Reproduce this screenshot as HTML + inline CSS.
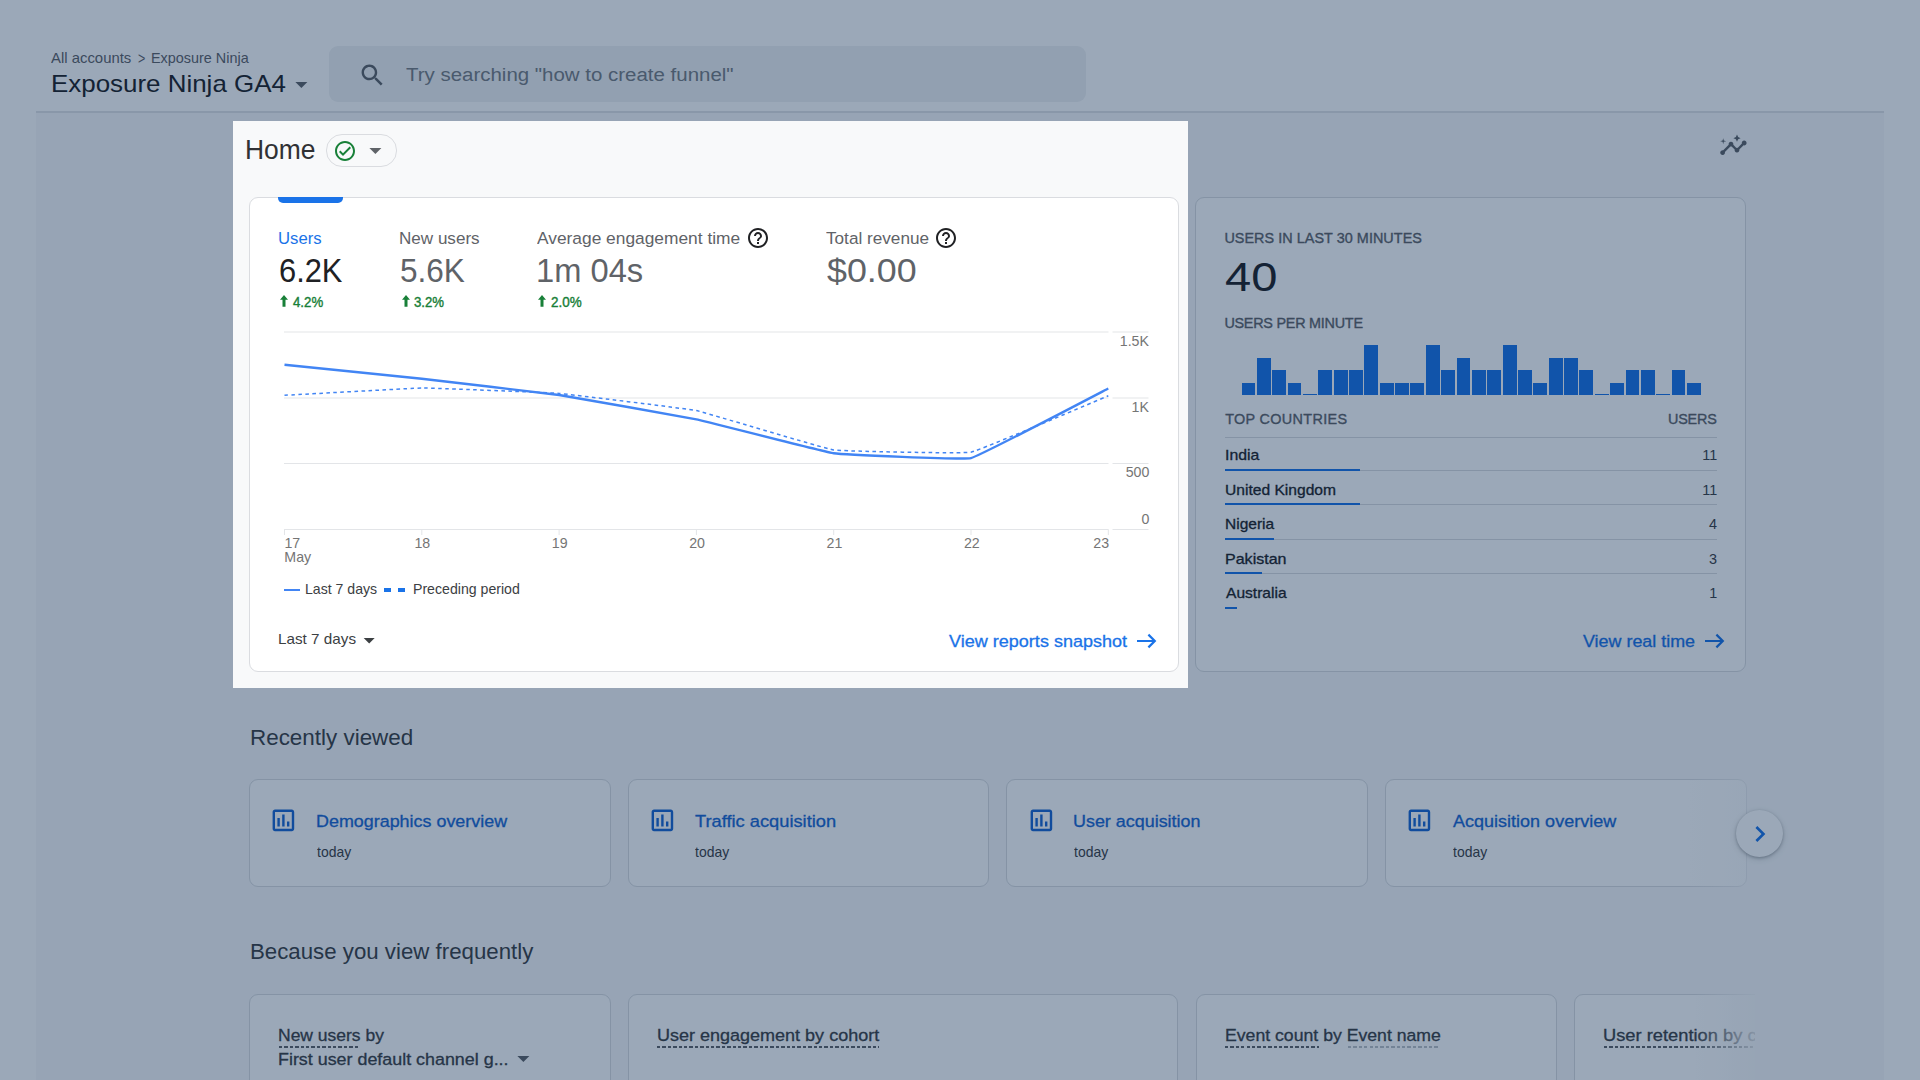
<!DOCTYPE html>
<html lang="en"><head><meta charset="utf-8"><title>Analytics | Home</title>
<style>
html,body{margin:0;padding:0;}
body{width:1920px;height:1080px;overflow:hidden;position:relative;background:#fff;font-family:"Liberation Sans", sans-serif;}
#app{position:absolute;left:0;top:0;width:1920px;height:1080px;overflow:hidden;}
</style></head><body><div id="app">
<div style="position:absolute;left:36px;top:112px;width:1848px;height:968px;background:#f8f9fa;"></div>
<div style="position:absolute;left:36px;top:111px;width:1848px;height:2px;background:#e1e3e7;"></div>
<div style="position:absolute;top:51px;font-size:14.4px;line-height:14.4px;color:#5f6368;white-space:nowrap;left:51.27px;transform:scaleX(1.0351);transform-origin:0 0;">All accounts</div>
<div style="position:absolute;top:50px;font-size:16.5px;line-height:16.5px;color:#5f6368;white-space:nowrap;left:138.09px;transform:scaleX(0.7591);transform-origin:0 0;">&gt;</div>
<div style="position:absolute;top:51px;font-size:14.4px;line-height:14.4px;color:#5f6368;white-space:nowrap;left:150.57px;transform:scaleX(1.0007);transform-origin:0 0;">Exposure Ninja</div>
<div style="position:absolute;top:72px;font-size:24px;line-height:24px;color:#202124;white-space:nowrap;left:50.87px;transform:scaleX(1.0802);transform-origin:0 0;">Exposure Ninja GA4</div>
<svg style="position:absolute;left:287.1px;top:69.6px" width="28.8" height="28.8" viewBox="0 0 24 24"><path fill="#5f6368" d="M7 10l5 5 5-5z"/></svg>
<div style="position:absolute;left:329px;top:46px;width:757px;height:56px;background:#f0f2f3;border-radius:9px;"></div>
<svg style="position:absolute;left:357.5px;top:61px" width="28.8" height="28.8" viewBox="0 0 24 24"><path fill="#5f6368" d="M15.5 14h-.79l-.28-.27C15.41 12.59 16 11.11 16 9.5 16 5.91 13.09 3 9.5 3S3 5.91 3 9.5 5.91 16 9.5 16c1.61 0 3.09-.59 4.23-1.57l.27.28v.79l5 4.99L20.49 19l-4.99-5zm-6 0C7.01 14 5 11.99 5 9.5S7.01 5 9.5 5 14 7.01 14 9.5 11.99 14 9.5 14z"/></svg>
<div style="position:absolute;top:65px;font-size:19.2px;line-height:19.2px;color:#787d83;white-space:nowrap;left:406.05px;transform:scaleX(1.0662);transform-origin:0 0;">Try searching &quot;how to create funnel&quot;</div>
<div style="position:absolute;top:137px;font-size:27px;line-height:27px;color:#303134;white-space:nowrap;left:245.13px;transform:scaleX(0.9795);transform-origin:0 0;">Home</div>
<div style="position:absolute;left:326px;top:134px;width:70.5px;height:33px;box-sizing:border-box;border:1px solid #dadce0;border-radius:16px;"></div>
<svg style="position:absolute;left:332.5px;top:138.5px" width="24" height="24" viewBox="0 0 24 24"><path fill="#188038" d="M12 2C6.48 2 2 6.48 2 12s4.48 10 10 10 10-4.48 10-10S17.52 2 12 2zm0 18c-4.41 0-8-3.59-8-8s3.59-8 8-8 8 3.59 8 8-3.59 8-8 8zm4.59-12.42L10 14.17l-2.59-2.58L6 13l4 4 8-8z"/></svg>
<svg style="position:absolute;left:360.6px;top:136.0px" width="28.8" height="28.8" viewBox="0 0 24 24"><path fill="#5f6368" d="M7 10l5 5 5-5z"/></svg>
<svg style="position:absolute;left:1719.3px;top:131.0px" width="28.8" height="28.8" viewBox="0 0 24 24"><path fill="#5f6368" d="M21 8c-1.45 0-2.26 1.44-1.93 2.51l-3.55 3.56c-.3-.09-.74-.09-1.04 0l-2.55-2.55C12.27 10.45 11.46 9 10 9c-1.45 0-2.27 1.44-1.93 2.52l-4.56 4.55C2.44 15.74 1 16.55 1 18c0 1.1.9 2 2 2 1.45 0 2.26-1.44 1.93-2.51l4.55-4.56c.3.09.74.09 1.04 0l2.55 2.55C12.73 16.55 13.54 18 15 18c1.45 0 2.27-1.44 1.93-2.52l3.56-3.55c1.07.33 2.51-.48 2.51-1.93 0-1.1-.9-2-2-2zM15 9l.94-2.07L18 6l-2.06-.93L15 3l-.92 2.07L12 6l2.08.93zM3.5 11L4 9l2-.5L4 8l-.5-2L3 8l-2 .5L3 9z"/></svg>
<div style="position:absolute;left:249px;top:197px;width:929.5px;height:475px;box-sizing:border-box;background:#fff;border:1px solid #dadce0;border-radius:9px;"></div>
<div style="position:absolute;left:278.25px;top:197px;width:65px;height:5.5px;background:#1a73e8;border-radius:0 0 5px 5px;"></div>
<div style="position:absolute;top:231px;font-size:16.8px;line-height:16.8px;color:#1a73e8;white-space:nowrap;left:278.21px;transform:scaleX(0.9948);transform-origin:0 0;">Users</div>
<div style="position:absolute;top:254px;font-size:33.6px;line-height:33.6px;color:#202124;white-space:nowrap;left:278.76px;transform:scaleX(0.9185);transform-origin:0 0;">6.2K</div>
<div style="position:absolute;top:231px;font-size:16.8px;line-height:16.8px;color:#5f6368;white-space:nowrap;left:399.10px;transform:scaleX(1.0170);transform-origin:0 0;">New users</div>
<div style="position:absolute;top:254px;font-size:33.6px;line-height:33.6px;color:#5f6368;white-space:nowrap;left:399.84px;transform:scaleX(0.9391);transform-origin:0 0;">5.6K</div>
<div style="position:absolute;top:231px;font-size:16.8px;line-height:16.8px;color:#5f6368;white-space:nowrap;left:537.37px;transform:scaleX(1.0338);transform-origin:0 0;">Average engagement time</div>
<div style="position:absolute;top:254px;font-size:33.6px;line-height:33.6px;color:#5f6368;white-space:nowrap;left:535.81px;transform:scaleX(0.9736);transform-origin:0 0;">1m 04s</div>
<div style="position:absolute;top:231px;font-size:16.8px;line-height:16.8px;color:#5f6368;white-space:nowrap;left:826.12px;transform:scaleX(1.0225);transform-origin:0 0;">Total revenue</div>
<div style="position:absolute;top:254px;font-size:33.6px;line-height:33.6px;color:#5f6368;white-space:nowrap;left:826.64px;transform:scaleX(1.0673);transform-origin:0 0;">$0.00</div>
<svg style="position:absolute;left:745.7px;top:226.4px" width="24" height="24" viewBox="0 0 24 24"><path fill="#202124" d="M11 18h2v-2h-2v2zm1-16C6.48 2 2 6.48 2 12s4.48 10 10 10 10-4.48 10-10S17.52 2 12 2zm0 18c-4.41 0-8-3.59-8-8s3.59-8 8-8 8 3.59 8 8-3.59 8-8 8zm0-14c-2.21 0-4 1.79-4 4h2c0-1.1.9-2 2-2s2 .9 2 2c0 2-3 1.75-3 5h2c0-2.25 3-2.5 3-5 0-2.21-1.79-4-4-4z"/></svg>
<svg style="position:absolute;left:933.5px;top:226.4px" width="24" height="24" viewBox="0 0 24 24"><path fill="#202124" d="M11 18h2v-2h-2v2zm1-16C6.48 2 2 6.48 2 12s4.48 10 10 10 10-4.48 10-10S17.52 2 12 2zm0 18c-4.41 0-8-3.59-8-8s3.59-8 8-8 8 3.59 8 8-3.59 8-8 8zm0-14c-2.21 0-4 1.79-4 4h2c0-1.1.9-2 2-2s2 .9 2 2c0 2-3 1.75-3 5h2c0-2.25 3-2.5 3-5 0-2.21-1.79-4-4-4z"/></svg>
<svg style="position:absolute;left:280.4px;top:295px" width="8" height="12" viewBox="0 0 8 12"><path fill="#188038" d="M4 0L8 4.8H5.5V11.8H2.5V4.8H0z"/></svg>
<div style="position:absolute;top:295px;font-size:14.4px;line-height:14.4px;color:#188038;white-space:nowrap;left:292.91px;transform:scaleX(0.9188);transform-origin:0 0;-webkit-text-stroke:0.4px #188038;">4.2%</div>
<svg style="position:absolute;left:401.9px;top:295px" width="8" height="12" viewBox="0 0 8 12"><path fill="#188038" d="M4 0L8 4.8H5.5V11.8H2.5V4.8H0z"/></svg>
<div style="position:absolute;top:295px;font-size:14.4px;line-height:14.4px;color:#188038;white-space:nowrap;left:414.40px;transform:scaleX(0.9161);transform-origin:0 0;-webkit-text-stroke:0.4px #188038;">3.2%</div>
<svg style="position:absolute;left:538.4px;top:295px" width="8" height="12" viewBox="0 0 8 12"><path fill="#188038" d="M4 0L8 4.8H5.5V11.8H2.5V4.8H0z"/></svg>
<div style="position:absolute;top:295px;font-size:14.4px;line-height:14.4px;color:#188038;white-space:nowrap;left:550.83px;transform:scaleX(0.9337);transform-origin:0 0;-webkit-text-stroke:0.4px #188038;">2.0%</div>
<svg style="position:absolute;left:0;top:0" width="1920" height="720" viewBox="0 0 1920 720"><rect x="284" y="331.5" width="824.5" height="1" fill="#e3e5e8"/><rect x="1112.5" y="331.5" width="36" height="1" fill="#e3e5e8"/><rect x="284" y="397.5" width="824.5" height="1" fill="#e3e5e8"/><rect x="1112.5" y="397.5" width="36" height="1" fill="#e3e5e8"/><rect x="284" y="463.0" width="824.5" height="1" fill="#e3e5e8"/><rect x="1112.5" y="463.0" width="36" height="1" fill="#e3e5e8"/><rect x="284" y="529.0" width="824.5" height="1" fill="#e3e5e8"/><rect x="1112.5" y="529.0" width="36" height="1" fill="#e3e5e8"/><rect x="284.0" y="529.5" width="1" height="5.5" fill="#e3e5e8"/><rect x="421.3" y="529.5" width="1" height="5.5" fill="#e3e5e8"/><rect x="558.6" y="529.5" width="1" height="5.5" fill="#e3e5e8"/><rect x="695.9" y="529.5" width="1" height="5.5" fill="#e3e5e8"/><rect x="833.2" y="529.5" width="1" height="5.5" fill="#e3e5e8"/><rect x="970.5" y="529.5" width="1" height="5.5" fill="#e3e5e8"/><rect x="1107.8" y="529.5" width="1" height="5.5" fill="#e3e5e8"/><path d="M284.5,395.3 C288.6,395.1 413.6,388.1 421.8,388.0 C430.0,387.9 550.9,392.7 559.1,393.4 C567.3,394.1 688.2,408.9 696.4,410.6 C704.6,412.3 825.5,448.8 833.7,450.0 C841.9,451.2 962.8,453.8 971.0,452.2 C979.2,450.6 1104.2,397.5 1108.3,395.8" fill="none" stroke="#4285f4" stroke-width="1.5" stroke-dasharray="3.6,3.4"/><path d="M284.5,364.7 C288.6,365.1 413.6,377.8 421.8,378.8 C430.0,379.7 550.9,393.8 559.1,395.0 C567.3,396.2 688.2,417.7 696.4,419.4 C704.6,421.1 825.5,452.1 833.7,453.3 C841.9,454.5 962.8,460.0 971.0,458.1 C979.2,456.2 1104.2,390.6 1108.3,388.5" fill="none" stroke="#4285f4" stroke-width="2.4" stroke-linejoin="round"/></svg>
<div style="position:absolute;top:334px;font-size:14.2px;line-height:14.2px;color:#757575;white-space:nowrap;right:771.04px;">1.5K</div>
<div style="position:absolute;top:400px;font-size:14.2px;line-height:14.2px;color:#757575;white-space:nowrap;right:771.04px;">1K</div>
<div style="position:absolute;top:465px;font-size:14.2px;line-height:14.2px;color:#757575;white-space:nowrap;right:770.65px;">500</div>
<div style="position:absolute;top:512px;font-size:14.2px;line-height:14.2px;color:#757575;white-space:nowrap;right:770.66px;">0</div>
<div style="position:absolute;top:536px;font-size:14.2px;line-height:14.2px;color:#757575;white-space:nowrap;left:284.42px;">17</div>
<div style="position:absolute;top:550px;font-size:14.2px;line-height:14.2px;color:#757575;white-space:nowrap;left:284.34px;">May</div>
<div style="position:absolute;top:536px;font-size:14.2px;line-height:14.2px;color:#757575;white-space:nowrap;left:414.47px;">18</div>
<div style="position:absolute;top:536px;font-size:14.2px;line-height:14.2px;color:#757575;white-space:nowrap;left:551.80px;">19</div>
<div style="position:absolute;top:536px;font-size:14.2px;line-height:14.2px;color:#757575;white-space:nowrap;left:689.22px;">20</div>
<div style="position:absolute;top:536px;font-size:14.2px;line-height:14.2px;color:#757575;white-space:nowrap;left:826.59px;">21</div>
<div style="position:absolute;top:536px;font-size:14.2px;line-height:14.2px;color:#757575;white-space:nowrap;left:963.90px;">22</div>
<div style="position:absolute;top:536px;font-size:14.2px;line-height:14.2px;color:#757575;white-space:nowrap;right:810.98px;">23</div>
<div style="position:absolute;left:284.2px;top:589px;width:15.7px;height:2.4px;background:#4285f4;"></div>
<div style="position:absolute;top:582px;font-size:14.2px;line-height:14.2px;color:#3c4043;white-space:nowrap;left:304.64px;transform:scaleX(0.9938);transform-origin:0 0;">Last 7 days</div>
<div style="position:absolute;left:384.4px;top:588.3px;width:7px;height:3.6px;background:#1a73e8;"></div>
<div style="position:absolute;left:398.2px;top:588.3px;width:7px;height:3.6px;background:#1a73e8;"></div>
<div style="position:absolute;top:582px;font-size:14.2px;line-height:14.2px;color:#3c4043;white-space:nowrap;left:412.54px;transform:scaleX(0.9955);transform-origin:0 0;">Preceding period</div>
<div style="position:absolute;top:632px;font-size:14.4px;line-height:14.4px;color:#3c4043;white-space:nowrap;left:278.45px;transform:scaleX(1.0606);transform-origin:0 0;">Last 7 days</div>
<svg style="position:absolute;left:355.8px;top:627.0px" width="26.4" height="26.4" viewBox="0 0 24 24"><path fill="#3c4043" d="M7 10l5 5 5-5z"/></svg>
<div style="position:absolute;top:634px;font-size:16.8px;line-height:16.8px;color:#1a73e8;white-space:nowrap;left:948.83px;transform:scaleX(1.0746);transform-origin:0 0;-webkit-text-stroke:0.3px #1a73e8;">View reports snapshot</div>
<svg style="position:absolute;left:1136px;top:631.8px" width="22" height="18" viewBox="0 0 22 18"><path d="M1 9H18.6M12.4 2.6L18.8 9L12.4 15.4" fill="none" stroke="#1a73e8" stroke-width="2.2"/></svg>
<div style="position:absolute;left:1195px;top:197px;width:551px;height:475px;box-sizing:border-box;background:#fff;border:1px solid #dadce0;border-radius:9px;"></div>
<div style="position:absolute;top:231px;font-size:14.4px;line-height:14.4px;color:#5f6368;white-space:nowrap;left:1224.39px;letter-spacing:0.046px;-webkit-text-stroke:0.35px #5f6368;">USERS IN LAST 30 MINUTES</div>
<div style="position:absolute;top:257px;font-size:40px;line-height:40px;color:#202124;white-space:nowrap;left:1225.46px;transform:scaleX(1.1763);transform-origin:0 0;">40</div>
<div style="position:absolute;top:316px;font-size:14.4px;line-height:14.4px;color:#5f6368;white-space:nowrap;left:1224.39px;letter-spacing:-0.247px;-webkit-text-stroke:0.35px #5f6368;">USERS PER MINUTE</div>
<div style="position:absolute;left:1241.5px;top:382.6px;width:13.9px;height:12px;background:#1a73e8;"></div>
<div style="position:absolute;left:1256.86px;top:358.0px;width:13.9px;height:36.6px;background:#1a73e8;"></div>
<div style="position:absolute;left:1272.22px;top:369.8px;width:13.9px;height:24.8px;background:#1a73e8;"></div>
<div style="position:absolute;left:1287.58px;top:382.6px;width:13.9px;height:12px;background:#1a73e8;"></div>
<div style="position:absolute;left:1302.94px;top:393.6px;width:13.9px;height:1px;background:#1a73e8;"></div>
<div style="position:absolute;left:1318.3px;top:369.8px;width:13.9px;height:24.8px;background:#1a73e8;"></div>
<div style="position:absolute;left:1333.66px;top:369.8px;width:13.9px;height:24.8px;background:#1a73e8;"></div>
<div style="position:absolute;left:1349.02px;top:369.8px;width:13.9px;height:24.8px;background:#1a73e8;"></div>
<div style="position:absolute;left:1364.38px;top:345.1px;width:13.9px;height:49.5px;background:#1a73e8;"></div>
<div style="position:absolute;left:1379.74px;top:382.6px;width:13.9px;height:12px;background:#1a73e8;"></div>
<div style="position:absolute;left:1395.1px;top:382.6px;width:13.9px;height:12px;background:#1a73e8;"></div>
<div style="position:absolute;left:1410.46px;top:382.6px;width:13.9px;height:12px;background:#1a73e8;"></div>
<div style="position:absolute;left:1425.82px;top:345.1px;width:13.9px;height:49.5px;background:#1a73e8;"></div>
<div style="position:absolute;left:1441.18px;top:369.8px;width:13.9px;height:24.8px;background:#1a73e8;"></div>
<div style="position:absolute;left:1456.54px;top:358.0px;width:13.9px;height:36.6px;background:#1a73e8;"></div>
<div style="position:absolute;left:1471.9px;top:369.8px;width:13.9px;height:24.8px;background:#1a73e8;"></div>
<div style="position:absolute;left:1487.26px;top:369.8px;width:13.9px;height:24.8px;background:#1a73e8;"></div>
<div style="position:absolute;left:1502.62px;top:345.1px;width:13.9px;height:49.5px;background:#1a73e8;"></div>
<div style="position:absolute;left:1517.98px;top:369.8px;width:13.9px;height:24.8px;background:#1a73e8;"></div>
<div style="position:absolute;left:1533.34px;top:382.6px;width:13.9px;height:12px;background:#1a73e8;"></div>
<div style="position:absolute;left:1548.7px;top:358.0px;width:13.9px;height:36.6px;background:#1a73e8;"></div>
<div style="position:absolute;left:1564.06px;top:358.0px;width:13.9px;height:36.6px;background:#1a73e8;"></div>
<div style="position:absolute;left:1579.42px;top:369.8px;width:13.9px;height:24.8px;background:#1a73e8;"></div>
<div style="position:absolute;left:1594.78px;top:393.6px;width:13.9px;height:1px;background:#1a73e8;"></div>
<div style="position:absolute;left:1610.14px;top:382.6px;width:13.9px;height:12px;background:#1a73e8;"></div>
<div style="position:absolute;left:1625.5px;top:369.8px;width:13.9px;height:24.8px;background:#1a73e8;"></div>
<div style="position:absolute;left:1640.86px;top:369.8px;width:13.9px;height:24.8px;background:#1a73e8;"></div>
<div style="position:absolute;left:1656.22px;top:393.6px;width:13.9px;height:1px;background:#1a73e8;"></div>
<div style="position:absolute;left:1671.58px;top:369.8px;width:13.9px;height:24.8px;background:#1a73e8;"></div>
<div style="position:absolute;left:1686.94px;top:382.6px;width:13.9px;height:12px;background:#1a73e8;"></div>
<div style="position:absolute;top:412px;font-size:14.4px;line-height:14.4px;color:#5f6368;white-space:nowrap;left:1225.18px;letter-spacing:0.339px;-webkit-text-stroke:0.35px #5f6368;">TOP COUNTRIES</div>
<div style="position:absolute;top:412px;font-size:14.4px;line-height:14.4px;color:#5f6368;white-space:nowrap;left:1667.89px;letter-spacing:-0.138px;-webkit-text-stroke:0.35px #5f6368;">USERS</div>
<div style="position:absolute;left:1225px;top:437px;width:491.5px;height:1px;background:#dadce0;"></div>
<div style="position:absolute;left:1225px;top:470.4px;width:491.5px;height:1px;background:#dadce0;"></div>
<div style="position:absolute;left:1225px;top:469.0px;width:135.0px;height:2.4px;background:linear-gradient(#1a73e8 0,#1a73e8 2px,rgba(26,115,232,.4) 2px);"></div>
<div style="position:absolute;top:448px;font-size:14.4px;line-height:14.4px;color:#202124;white-space:nowrap;left:1224.64px;transform:scaleX(1.1000);transform-origin:0 0;-webkit-text-stroke:0.3px #202124;">India</div>
<div style="position:absolute;top:448px;font-size:14.4px;line-height:14.4px;color:#3c4043;white-space:nowrap;right:202.81px;">11</div>
<div style="position:absolute;left:1225px;top:504.4px;width:491.5px;height:1px;background:#dadce0;"></div>
<div style="position:absolute;left:1225px;top:503.0px;width:135.0px;height:2.4px;background:linear-gradient(#1a73e8 0,#1a73e8 2px,rgba(26,115,232,.4) 2px);"></div>
<div style="position:absolute;top:483px;font-size:14.4px;line-height:14.4px;color:#202124;white-space:nowrap;left:1224.90px;transform:scaleX(1.0845);transform-origin:0 0;-webkit-text-stroke:0.3px #202124;">United Kingdom</div>
<div style="position:absolute;top:483px;font-size:14.4px;line-height:14.4px;color:#3c4043;white-space:nowrap;right:202.81px;">11</div>
<div style="position:absolute;left:1225px;top:539.4px;width:491.5px;height:1px;background:#dadce0;"></div>
<div style="position:absolute;left:1225px;top:538.0px;width:49.1px;height:2.4px;background:linear-gradient(#1a73e8 0,#1a73e8 2px,rgba(26,115,232,.4) 2px);"></div>
<div style="position:absolute;top:517px;font-size:14.4px;line-height:14.4px;color:#202124;white-space:nowrap;left:1224.83px;transform:scaleX(1.0775);transform-origin:0 0;-webkit-text-stroke:0.3px #202124;">Nigeria</div>
<div style="position:absolute;top:517px;font-size:14.4px;line-height:14.4px;color:#3c4043;white-space:nowrap;right:203.08px;">4</div>
<div style="position:absolute;left:1225px;top:573.4px;width:491.5px;height:1px;background:#dadce0;"></div>
<div style="position:absolute;left:1225px;top:572.0px;width:36.8px;height:2.4px;background:linear-gradient(#1a73e8 0,#1a73e8 2px,rgba(26,115,232,.4) 2px);"></div>
<div style="position:absolute;top:552px;font-size:14.4px;line-height:14.4px;color:#202124;white-space:nowrap;left:1224.78px;transform:scaleX(1.1144);transform-origin:0 0;-webkit-text-stroke:0.3px #202124;">Pakistan</div>
<div style="position:absolute;top:552px;font-size:14.4px;line-height:14.4px;color:#3c4043;white-space:nowrap;right:202.88px;">3</div>
<div style="position:absolute;left:1225px;top:606.6px;width:12.3px;height:2.4px;background:linear-gradient(#1a73e8 0,#1a73e8 2px,rgba(26,115,232,.4) 2px);"></div>
<div style="position:absolute;top:586px;font-size:14.4px;line-height:14.4px;color:#202124;white-space:nowrap;left:1226.07px;transform:scaleX(1.0818);transform-origin:0 0;-webkit-text-stroke:0.3px #202124;">Australia</div>
<div style="position:absolute;top:586px;font-size:14.4px;line-height:14.4px;color:#3c4043;white-space:nowrap;right:202.81px;">1</div>
<div style="position:absolute;top:634px;font-size:16.8px;line-height:16.8px;color:#1a73e8;white-space:nowrap;left:1583.13px;transform:scaleX(1.0661);transform-origin:0 0;-webkit-text-stroke:0.3px #1a73e8;">View real time</div>
<svg style="position:absolute;left:1704.2px;top:631.8px" width="22" height="18" viewBox="0 0 22 18"><path d="M1 9H18.6M12.4 2.6L18.8 9L12.4 15.4" fill="none" stroke="#1a73e8" stroke-width="2.2"/></svg>
<div style="position:absolute;top:727px;font-size:21.6px;line-height:21.6px;color:#3c4043;white-space:nowrap;left:250.16px;transform:scaleX(1.0382);transform-origin:0 0;">Recently viewed</div>
<div style="position:absolute;left:249px;top:779px;width:361.7px;height:107.5px;box-sizing:border-box;background:#fff;border:1px solid #dadce0;border-radius:9px;"></div>
<svg style="position:absolute;left:269.2px;top:806px" width="28.8" height="28.8" viewBox="0 0 24 24"><path fill="#1967d2" d="M19 3H5c-1.1 0-2 .9-2 2v14c0 1.1.9 2 2 2h14c1.1 0 2-.9 2-2V5c0-1.1-.9-2-2-2zm0 16H5V5h14v14zM7 10h2v7H7zm4-3h2v10h-2zm4 6h2v4h-2z"/></svg>
<div style="position:absolute;top:814px;font-size:16.8px;line-height:16.8px;color:#1967d2;white-space:nowrap;left:315.63px;transform:scaleX(1.0672);transform-origin:0 0;-webkit-text-stroke:0.3px #1967d2;">Demographics overview</div>
<div style="position:absolute;top:845px;font-size:14.4px;line-height:14.4px;color:#3c4043;white-space:nowrap;left:316.59px;transform:scaleX(0.9692);transform-origin:0 0;">today</div>
<div style="position:absolute;left:627.7px;top:779px;width:361.7px;height:107.5px;box-sizing:border-box;background:#fff;border:1px solid #dadce0;border-radius:9px;"></div>
<svg style="position:absolute;left:647.9000000000001px;top:806px" width="28.8" height="28.8" viewBox="0 0 24 24"><path fill="#1967d2" d="M19 3H5c-1.1 0-2 .9-2 2v14c0 1.1.9 2 2 2h14c1.1 0 2-.9 2-2V5c0-1.1-.9-2-2-2zm0 16H5V5h14v14zM7 10h2v7H7zm4-3h2v10h-2zm4 6h2v4h-2z"/></svg>
<div style="position:absolute;top:814px;font-size:16.8px;line-height:16.8px;color:#1967d2;white-space:nowrap;left:695.40px;transform:scaleX(1.0886);transform-origin:0 0;-webkit-text-stroke:0.3px #1967d2;">Traffic acquisition</div>
<div style="position:absolute;top:845px;font-size:14.4px;line-height:14.4px;color:#3c4043;white-space:nowrap;left:695.29px;transform:scaleX(0.9692);transform-origin:0 0;">today</div>
<div style="position:absolute;left:1006.3px;top:779px;width:361.7px;height:107.5px;box-sizing:border-box;background:#fff;border:1px solid #dadce0;border-radius:9px;"></div>
<svg style="position:absolute;left:1026.5px;top:806px" width="28.8" height="28.8" viewBox="0 0 24 24"><path fill="#1967d2" d="M19 3H5c-1.1 0-2 .9-2 2v14c0 1.1.9 2 2 2h14c1.1 0 2-.9 2-2V5c0-1.1-.9-2-2-2zm0 16H5V5h14v14zM7 10h2v7H7zm4-3h2v10h-2zm4 6h2v4h-2z"/></svg>
<div style="position:absolute;top:814px;font-size:16.8px;line-height:16.8px;color:#1967d2;white-space:nowrap;left:1073.02px;transform:scaleX(1.0679);transform-origin:0 0;-webkit-text-stroke:0.3px #1967d2;">User acquisition</div>
<div style="position:absolute;top:845px;font-size:14.4px;line-height:14.4px;color:#3c4043;white-space:nowrap;left:1073.89px;transform:scaleX(0.9692);transform-origin:0 0;">today</div>
<div style="position:absolute;left:1385px;top:779px;width:361.7px;height:107.5px;box-sizing:border-box;background:#fff;border:1px solid #dadce0;border-radius:9px;"></div>
<svg style="position:absolute;left:1405.2px;top:806px" width="28.8" height="28.8" viewBox="0 0 24 24"><path fill="#1967d2" d="M19 3H5c-1.1 0-2 .9-2 2v14c0 1.1.9 2 2 2h14c1.1 0 2-.9 2-2V5c0-1.1-.9-2-2-2zm0 16H5V5h14v14zM7 10h2v7H7zm4-3h2v10h-2zm4 6h2v4h-2z"/></svg>
<div style="position:absolute;top:814px;font-size:16.8px;line-height:16.8px;color:#1967d2;white-space:nowrap;left:1453.06px;transform:scaleX(1.0735);transform-origin:0 0;-webkit-text-stroke:0.3px #1967d2;">Acquisition overview</div>
<div style="position:absolute;top:845px;font-size:14.4px;line-height:14.4px;color:#3c4043;white-space:nowrap;left:1452.59px;transform:scaleX(0.9692);transform-origin:0 0;">today</div>
<div style="position:absolute;left:1688px;top:775px;width:59.5px;height:116px;background:linear-gradient(to right,rgba(248,249,250,0),rgba(248,249,250,.55));"></div>
<div style="position:absolute;left:1735.7px;top:810.2px;width:47px;height:47px;background:#fff;border-radius:50%;box-shadow:0 1px 3px rgba(60,64,67,.35),0 2px 6px rgba(60,64,67,.18);"></div>
<svg style="position:absolute;left:1743.7px;top:817.5px" width="32" height="32" viewBox="0 0 24 24"><path fill="#1a73e8" d="M10 6L8.59 7.41 13.17 12l-4.58 4.59L10 18l6-6z"/></svg>
<div style="position:absolute;top:941px;font-size:21.6px;line-height:21.6px;color:#3c4043;white-space:nowrap;left:250.17px;transform:scaleX(1.0306);transform-origin:0 0;">Because you view frequently</div>
<div style="position:absolute;left:249px;top:994px;width:361.7px;height:120px;box-sizing:border-box;background:#fff;border:1px solid #dadce0;border-radius:9px;"></div>
<div style="position:absolute;left:627.7px;top:994px;width:550.8px;height:120px;box-sizing:border-box;background:#fff;border:1px solid #dadce0;border-radius:9px;"></div>
<div style="position:absolute;left:1195.5px;top:994px;width:361.7px;height:120px;box-sizing:border-box;background:#fff;border:1px solid #dadce0;border-radius:9px;"></div>
<div style="position:absolute;left:1574.2px;top:994px;width:230px;height:120px;box-sizing:border-box;background:#fff;border:1px solid #dadce0;border-radius:9px;"></div>
<div style="position:absolute;top:1028px;font-size:16.8px;line-height:16.8px;color:#3c4043;white-space:nowrap;left:278.36px;transform:scaleX(1.0422);transform-origin:0 0;-webkit-text-stroke:0.3px #3c4043;">New users by</div>
<div style="position:absolute;top:1052px;font-size:16.8px;line-height:16.8px;color:#3c4043;white-space:nowrap;left:278.33px;transform:scaleX(1.0653);transform-origin:0 0;-webkit-text-stroke:0.3px #3c4043;">First user default channel g...</div>
<svg style="position:absolute;left:509px;top:1043.8px" width="28.8" height="28.8" viewBox="0 0 24 24"><path fill="#5f6368" d="M7 10l5 5 5-5z"/></svg>
<div style="position:absolute;top:1028px;font-size:16.8px;line-height:16.8px;color:#3c4043;white-space:nowrap;left:656.91px;transform:scaleX(1.0728);transform-origin:0 0;-webkit-text-stroke:0.3px #3c4043;">User engagement by cohort</div>
<div style="position:absolute;top:1028px;font-size:16.8px;line-height:16.8px;color:#3c4043;white-space:nowrap;left:1224.65px;transform:scaleX(1.0520);transform-origin:0 0;-webkit-text-stroke:0.3px #3c4043;">Event count by Event name</div>
<div style="position:absolute;top:1028px;font-size:16.8px;line-height:16.8px;color:#3c4043;white-space:nowrap;left:1602.69px;transform:scaleX(1.0901);transform-origin:0 0;-webkit-text-stroke:0.3px #3c4043;">User retention by cohort</div>
<div style="position:absolute;left:279.3px;top:1046.4px;width:81.0px;height:1.5px;background:repeating-linear-gradient(to right,#5f6368 0,#5f6368 3.3px,transparent 3.3px,transparent 5.4px);"></div>
<div style="position:absolute;left:657.4px;top:1046.4px;width:221.8px;height:1.5px;background:repeating-linear-gradient(to right,#5f6368 0,#5f6368 3.3px,transparent 3.3px,transparent 5.4px);"></div>
<div style="position:absolute;left:1225.3px;top:1046.4px;width:93.9px;height:1.5px;background:repeating-linear-gradient(to right,#5f6368 0,#5f6368 3.3px,transparent 3.3px,transparent 5.4px);"></div>
<div style="position:absolute;left:1348px;top:1046.4px;width:92.0px;height:1.5px;background:repeating-linear-gradient(to right,#bdc1c6 0,#bdc1c6 3.3px,transparent 3.3px,transparent 5.4px);"></div>
<div style="position:absolute;left:1603.6px;top:1046.4px;width:194.4px;height:1.5px;background:repeating-linear-gradient(to right,#5f6368 0,#5f6368 3.3px,transparent 3.3px,transparent 5.4px);"></div>
<div style="position:absolute;left:1694px;top:990px;width:61px;height:90px;background:linear-gradient(to right,rgba(248,249,250,0),rgba(248,249,250,.85));"></div>
<div style="position:absolute;left:1755px;top:990px;width:129px;height:90px;background:#f8f9fa;"></div>
<div style="position:absolute;left:233px;top:121px;width:955px;height:567px;box-shadow:0 0 0 3000px rgba(5,38,78,0.4);"></div>
</div></body></html>
